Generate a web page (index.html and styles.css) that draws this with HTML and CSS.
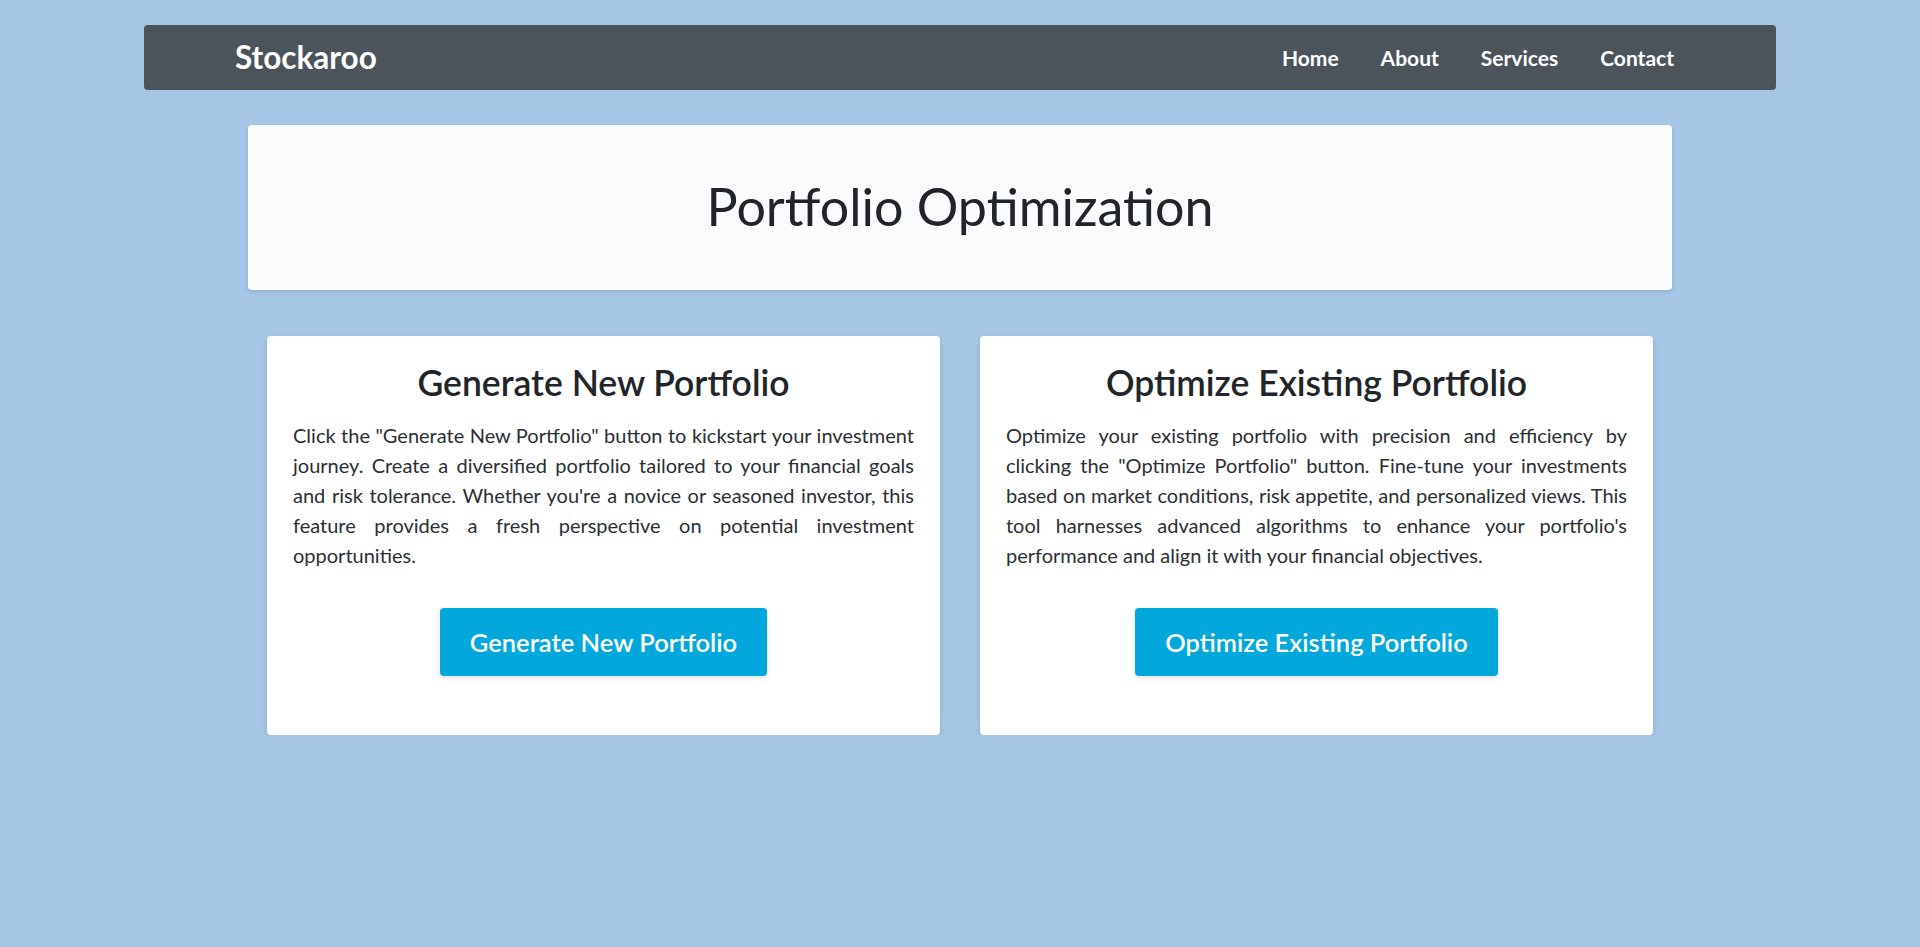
FILE: index.html
```html
<!DOCTYPE html>
<html lang="en">
<head>
<meta charset="utf-8">
<title>Stockaroo - Portfolio Optimization</title>
<link rel="stylesheet" href="styles.css">
</head>
<body>
<nav class="navbar">
  <a class="brand" href="#">Stockaroo</a>
  <ul class="nav-links">
    <li><a href="#">Home</a></li>
    <li><a href="#">About</a></li>
    <li><a href="#">Services</a></li>
    <li><a href="#">Contact</a></li>
  </ul>
</nav>
<main class="main">
  <section class="hero">
    <h1 class="hero-title">Portfolio Optimization</h1>
  </section>
  <section class="cards">
    <div class="card">
      <h2 class="card-title">Generate New Portfolio</h2>
      <p class="card-text">Click the "Generate New Portfolio" button to kickstart your investment journey. Create a diversified portfolio tailored to your financial goals and risk tolerance. Whether you're a novice or seasoned investor, this feature provides a fresh perspective on potential investment opportunities.</p>
      <a class="btn" href="#">Generate New Portfolio</a>
    </div>
    <div class="card">
      <h2 class="card-title">Optimize Existing Portfolio</h2>
      <p class="card-text">Optimize your existing portfolio with precision and efficiency by clicking the "Optimize Portfolio" button. Fine-tune your investments based on market conditions, risk appetite, and personalized views. This tool harnesses advanced algorithms to enhance your portfolio's performance and align it with your financial objectives.</p>
      <a class="btn" href="#">Optimize Existing Portfolio</a>
    </div>
  </section>
</main>
</body>
</html>
```

FILE: styles.css
```css
* { box-sizing: border-box; }

body {
  margin: 0;
  background: #a6c6e6;
  font-family: "Lato", "Liberation Sans", sans-serif;
  color: #212529;
}

a { text-decoration: none; }

.navbar {
  margin: 25px 144px 0;
  height: 65px;
  background: #4b535b;
  border-radius: 4px;
  display: flex;
  align-items: center;
  justify-content: space-between;
  padding: 0 81px 0 91px;
}

.brand {
  color: #fff;
  font-weight: 700;
  font-size: 31.5px;
  line-height: 1;
}

.nav-links {
  list-style: none;
  margin: 0;
  padding: 0;
  display: flex;
}

.nav-links a {
  display: block;
  color: #fff;
  font-weight: 700;
  font-size: 21px;
  padding: 0 21px;
  line-height: 1;
}

.main {
  width: 1424px;
  margin: 35px auto 0;
}

.hero {
  height: 165px;
  background: #f9fbfd;
  border-radius: 4px;
  box-shadow: 0 2px 4px rgba(0, 0, 0, 0.12);
  display: flex;
  align-items: center;
  justify-content: center;
}

.hero-title {
  margin: 0 0 3px;
  font-size: 52px;
  font-weight: 400;
  line-height: 1.2;
}

.cards {
  display: grid;
  grid-template-columns: 1fr 1fr;
  gap: 40px;
  padding: 0 19px;
  margin-top: 46px;
}

.card {
  background: #fff;
  border-radius: 4px;
  box-shadow: 0 2px 5px rgba(0, 0, 0, 0.15);
  padding: 26px 26px 59px;
  display: flex;
  flex-direction: column;
  align-items: center;
}

.card-title {
  margin: 0;
  font-size: 35.5px;
  font-weight: 600;
  line-height: 1.2;
  text-align: center;
}

.card-text {
  margin: 15px 0 38px;
  font-size: 20px;
  line-height: 30px;
  text-align: justify;
  color: #2b2f33;
}

.btn {
  display: inline-flex;
  align-items: center;
  height: 68px;
  padding: 0 30px;
  background: #02a8dc;
  color: #fff;
  font-size: 25.5px;
  font-weight: 600;
  border-radius: 4px;
  box-shadow: 0 2px 5px rgba(0, 0, 0, 0.12);
}
```
